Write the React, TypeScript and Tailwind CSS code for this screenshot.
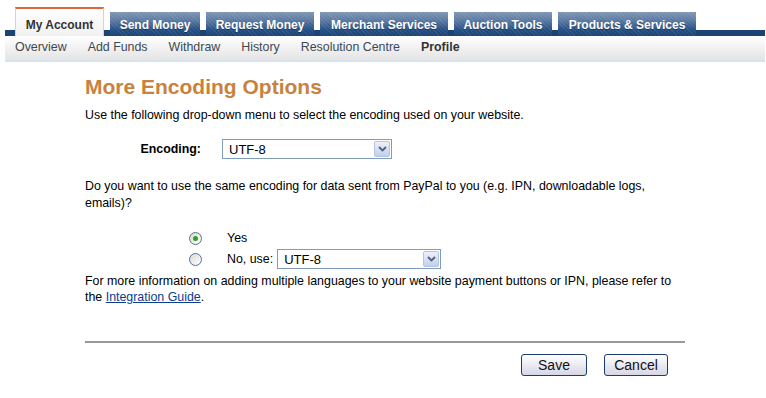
import React from 'react';

const tabs = [
  { label: 'Send Money', w: 'w-[90px]' },
  { label: 'Request Money', w: 'w-[108px]' },
  { label: 'Merchant Services', w: 'w-[128px]' },
  { label: 'Auction Tools', w: 'w-[98px]' },
  { label: 'Products & Services', w: 'w-[138px]' },
];

const subnav = ['Overview', 'Add Funds', 'Withdraw', 'History', 'Resolution Centre'];

function Select({ width }: { width: string }) {
  return (
    <div className={`flex h-[20px] items-center border border-[#7f9db9] bg-white ${width}`}>
      <span className="flex-1 pl-[6px] text-[13px] leading-none text-black">UTF-8</span>
      <span className="m-px flex h-[16px] w-[16px] items-center justify-center rounded-[2px] border border-[#b4c4e6] bg-gradient-to-b from-[#edf1fb] to-[#c3cfea]">
        <svg width="9" height="6" viewBox="0 0 9 6">
          <path d="M1 1l3.5 3.5L8 1" stroke="#4d6185" strokeWidth="1.8" fill="none" />
        </svg>
      </span>
    </div>
  );
}

function Radio({ checked }: { checked?: boolean }) {
  return (
    <span className="flex h-[13px] w-[13px] items-center justify-center rounded-full border border-[#55708f] bg-gradient-to-br from-[#d9d9d4] to-white">
      {checked && <span className="h-[5px] w-[5px] rounded-full bg-[#2aa22a]" />}
    </span>
  );
}

function Button({ label, width }: { label: string; width: string }) {
  return (
    <button
      className={`h-[22px] ${width} rounded-[3px] border border-[#1c3c6c] bg-gradient-to-b from-white to-[#d6d6e6] text-[14px] leading-none text-[#111]`}
    >
      {label}
    </button>
  );
}

export default function App() {
  return (
    <div className="min-h-[398px] bg-white pt-[7px] font-['Liberation_Sans',Arial,sans-serif] text-[12.4px] text-black">
      {/* main tabs */}
      <div className="mx-[5px] w-[760px] bg-[linear-gradient(to_bottom,transparent_23px,#1b4373_23px)]">
        <div className="flex h-[29px] items-end gap-[6px] pl-[10px] text-[12px]">
          <div className="flex h-[29px] w-[89px] items-start justify-center border-x border-t-2 border-x-[#d4d4d4] border-t-[#e0683c] bg-gradient-to-b from-white to-[#f1f1f1] pt-[7px] font-bold text-[#333]">
            My Account
          </div>
          {tabs.map((t) => (
            <div
              key={t.label}
              className={`flex h-[24px] ${t.w} items-start justify-center bg-[repeating-linear-gradient(45deg,rgba(255,255,255,0.07)_0px,rgba(255,255,255,0.07)_1px,transparent_1px,transparent_3px),linear-gradient(to_bottom,#8097b5_0%,#5b7aa2_35%,#244f85_75%,#1b4373_100%)] pt-[4px] font-bold text-white [text-shadow:0_1px_0_rgba(0,0,0,0.35)]`}
            >
              {t.label}
            </div>
          ))}
        </div>
      </div>

      {/* sub navigation */}
      <div className="mx-[5px] flex h-[26px] w-[760px] items-center gap-[21px] border-b-2 border-[#d7e2ef] bg-gradient-to-b from-white to-[#e4e4e4] pb-[2px] pl-[10px] text-[#3e4852]">
        {subnav.map((s) => (
          <span key={s}>{s}</span>
        ))}
        <span className="font-bold text-[#333]">Profile</span>
      </div>

      {/* content */}
      <div className="ml-[85px] w-[600px]">
        <h1 className="mt-[13px] text-[21px] font-bold leading-[24px] text-[#c9823e]">More Encoding Options</h1>
        <p className="mt-[9px] leading-[15px]">Use the following drop-down menu to select the encoding used on your website.</p>

        <div className="mt-[16px] flex h-[20px] items-center">
          <span className="w-[116px] text-right font-bold">Encoding:</span>
          <div className="ml-[21px]">
            <Select width="w-[170px]" />
          </div>
        </div>

        <p className="mt-[19px] leading-[17px]">
          Do you want to use the same encoding for data sent from PayPal to you (e.g. IPN, downloadable logs, emails)?
        </p>

        <div className="mt-[16px] flex h-[20px] items-center pl-[104px]">
          <Radio checked />
          <span className="ml-[25px]">Yes</span>
        </div>
        <div className="mt-px flex h-[20px] items-center pl-[104px]">
          <Radio />
          <span className="ml-[25px]">No, use:</span>
          <div className="ml-[4px]">
            <Select width="w-[164px]" />
          </div>
        </div>

        <p className="mt-[4px] leading-[16px]">
          For more information on adding multiple languages to your website payment buttons or IPN, please refer to the{' '}
          <a href="#" className="text-[#0b3d91] underline">Integration Guide</a>.
        </p>

        <div className="mt-[36px] h-[2px] w-[600px] bg-[#999]" />

        <div className="mt-[11px] flex justify-end gap-[17px] pr-[17px]">
          <Button label="Save" width="w-[66px]" />
          <Button label="Cancel" width="w-[64px]" />
        </div>
      </div>
    </div>
  );
}
